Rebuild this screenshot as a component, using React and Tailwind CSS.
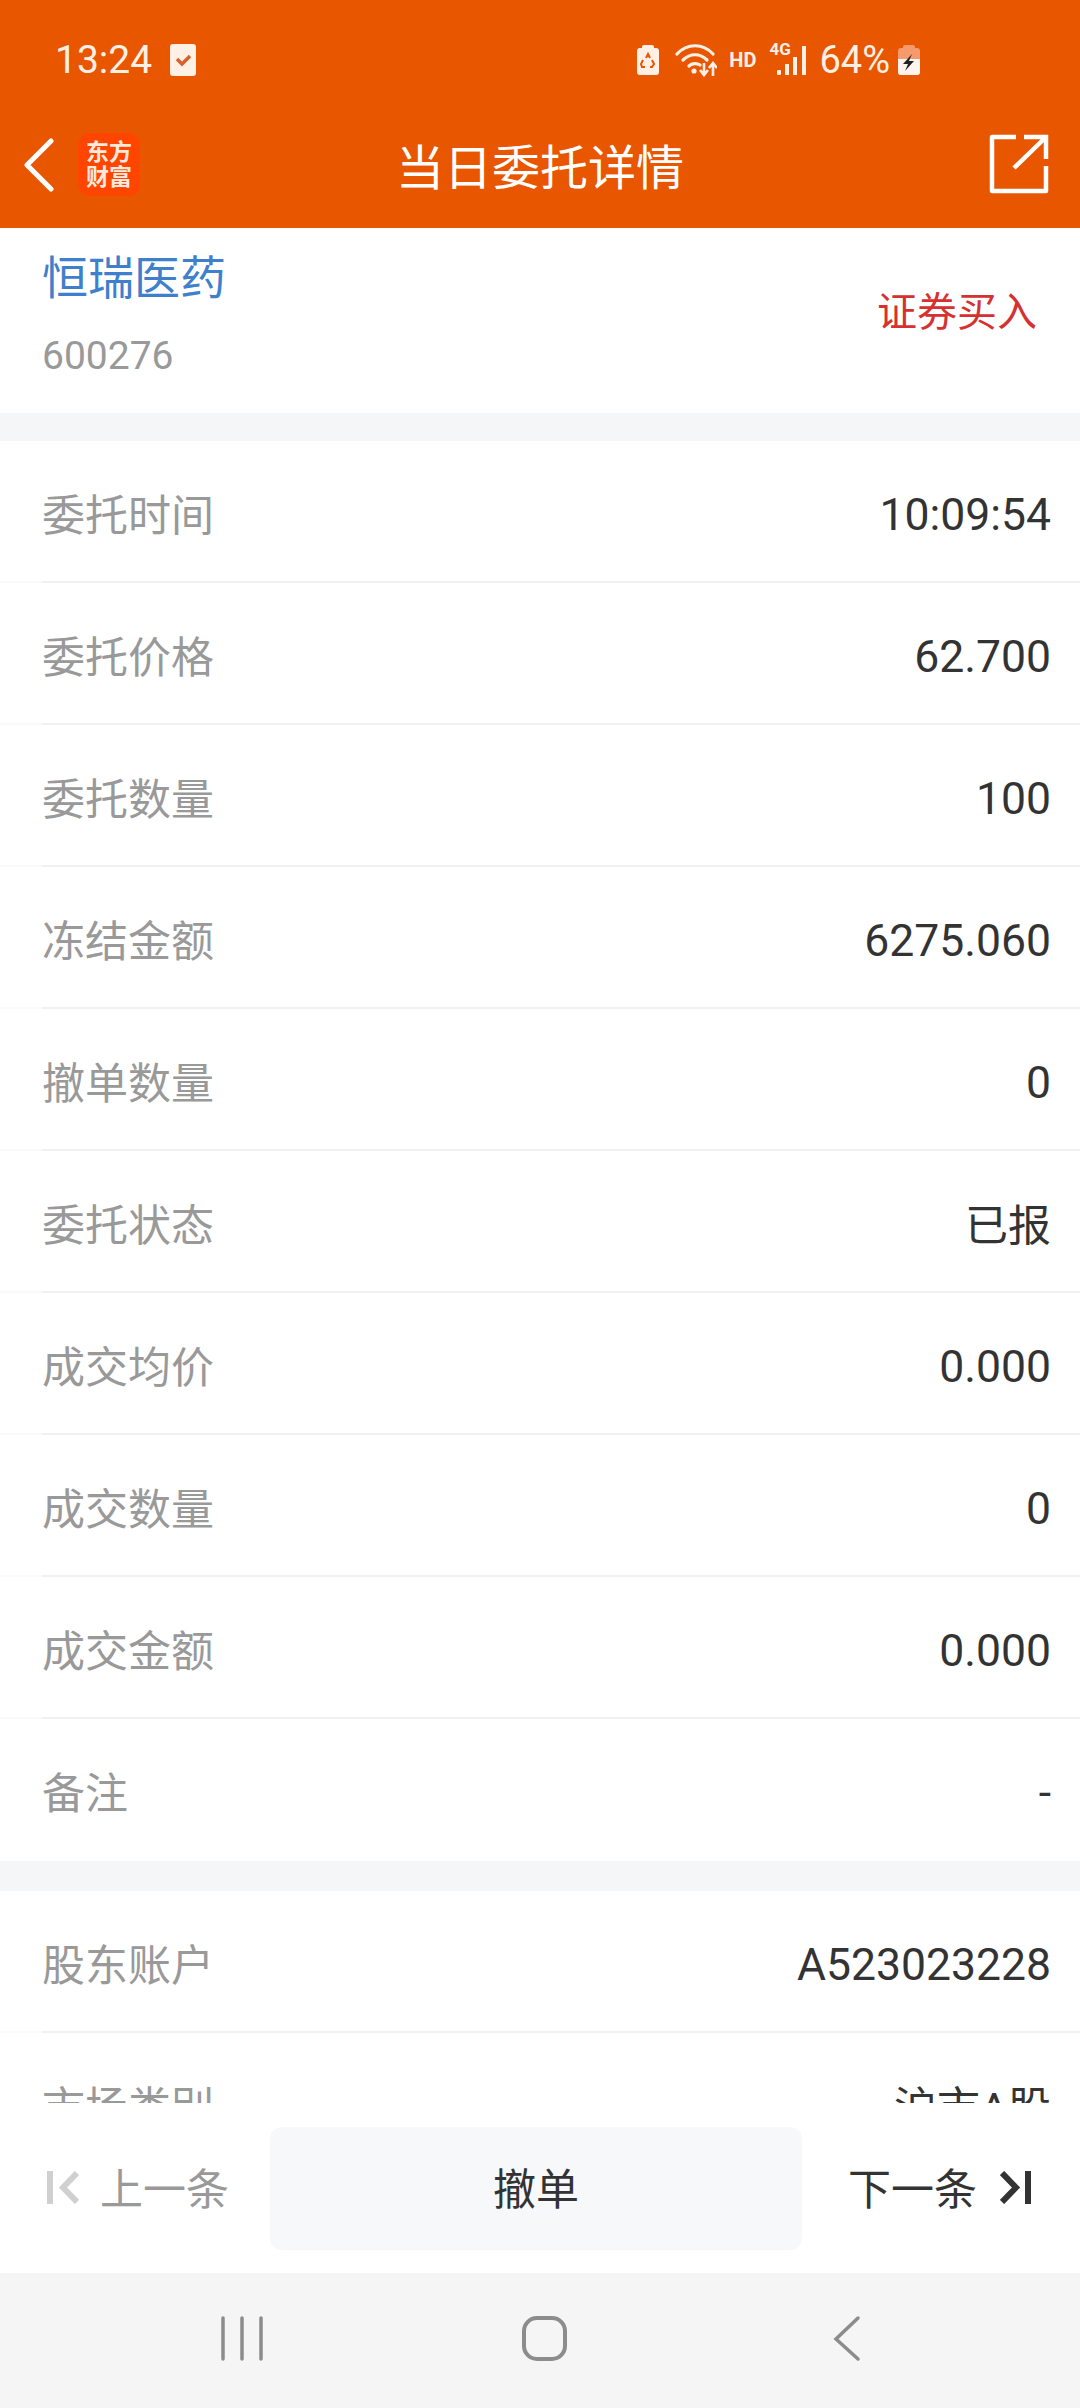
import React from 'react';

const mainRows = [
  ['委托时间', '10:09:54'],
  ['委托价格', '62.700'],
  ['委托数量', '100'],
  ['冻结金额', '6275.060'],
  ['撤单数量', '0'],
  ['委托状态', '已报', true],
  ['成交均价', '0.000'],
  ['成交数量', '0'],
  ['成交金额', '0.000'],
  ['备注', '-'],
];

const accountRows = [
  ['股东账户', 'A523023228'],
  ['市场类别', '沪市A股', true],
];

const Row = ({ label, value, cjk, last }) => (
  <div className="relative flex h-[142px] shrink-0 items-center justify-between pl-[42px] pr-[29px] pt-[6px]">
    <span className="pt-[2px] text-[43px] text-[#999999]">{label}</span>
    {cjk ? (
      <span className="pt-[2px] text-[43px] text-[#333333]">{value}</span>
    ) : (
      <span className="text-[44.5px] text-[#333333]">{value}</span>
    )}
    {!last && (
      <>
        <div className="absolute bottom-0 left-0 h-[2px] w-[42px] bg-[#fafafa]" />
        <div className="absolute bottom-0 left-[42px] right-0 h-[2px] bg-[#f1f1f1]" />
      </>
    )}
  </div>
);

const StatusIcons = () => (
  <div className="flex items-center">
    {/* batterie recyclage */}
    <svg width="22" height="30" viewBox="0 0 22 30" className="mr-[16px]">
      <path d="M7 0h8a2 2 0 0 1 2 2v1h2a3 3 0 0 1 3 3v21a3 3 0 0 1-3 3H3a3 3 0 0 1-3-3V6a3 3 0 0 1 3-3h2V2a2 2 0 0 1 2-2z" fill="#fff0e6" />
      <path d="M9 13l2-4 2 4M15 15l2 4-2 3h-2M8 22H5l-1-3 2-4" fill="none" stroke="#e85600" strokeWidth="2" />
    </svg>
    {/* wifi */}
    <svg width="42" height="34" viewBox="0 0 42 34" className="mr-[12px]">
      <g fill="none" stroke="#fff0e6" strokeWidth="3.2" strokeLinecap="round">
        <path d="M2 11C12 0 28 0 38 11" />
        <path d="M8 17c7-7 17-7 24 0" />
        <path d="M14 23c3-3 8-3 11-1" />
      </g>
      <circle cx="19" cy="28" r="2.6" fill="#fff0e6" />
      <path d="M29 20v11M25 27l4 5 4-5M38 33V21M34 25l4-5 4 5" fill="none" stroke="#fff0e6" strokeWidth="2.6" />
    </svg>
    <span className="mr-[13px] text-[20px] font-bold leading-none text-[#fff0e6]">HD</span>
    {/* 4G signal */}
    <div className="relative mr-[12px] h-[34px] w-[38px]">
      <span className="absolute left-0 top-[-2px] text-[17px] font-bold leading-[17px] text-[#fff0e6]">4G</span>
      <svg width="38" height="34" viewBox="0 0 38 34" className="absolute left-0 top-0">
        <g fill="#fff0e6">
          <rect x="8" y="27" width="4" height="5" rx="1" />
          <rect x="16" y="21" width="4" height="11" />
          <rect x="24" y="14" width="4" height="18" />
          <rect x="33" y="3" width="4" height="29" />
        </g>
      </svg>
    </div>
    <span className="mr-[8px] text-[38px] leading-none text-[#fff0e6]">64%</span>
    {/* batterie en charge */}
    <svg width="22" height="30" viewBox="0 0 22 30">
      <path d="M7 0h8a2 2 0 0 1 2 2v1h2a3 3 0 0 1 3 3v21a3 3 0 0 1-3 3H3a3 3 0 0 1-3-3V6a3 3 0 0 1 3-3h2V2a2 2 0 0 1 2-2z" fill="#f59a6c" />
      <path d="M0 14h22v13a3 3 0 0 1-3 3H3a3 3 0 0 1-3-3z" fill="#fff5ee" />
      <path d="M14 9L5 19h5l-3 7 9-10h-5l3-7z" fill="#222222" />
    </svg>
  </div>
);

export default function App() {
  return (
    <div
      className="flex h-[2408px] w-[1080px] flex-col overflow-hidden bg-white"
      style={{ fontFamily: 'Roboto, "Noto Sans CJK SC", sans-serif' }}
    >
      {/* En-tête */}
      <header className="h-[228px] shrink-0 bg-[#e85600]">
        <div className="flex h-[120px] items-center justify-between pl-[55px] pr-[160px]">
          <div className="flex items-center">
            <span className="text-[39px] leading-none text-[#fff0e6]">13:24</span>
            <div className="ml-[18px] flex h-[32px] w-[26px] items-center justify-center rounded-[3px] bg-[#fff0e6]">
              <svg width="18" height="14" viewBox="0 0 18 14">
                <path d="M3 6l5 5 8-8" fill="none" stroke="#d9602a" strokeWidth="3.4" />
              </svg>
            </div>
          </div>
          <StatusIcons />
        </div>
        <div className="relative flex h-[108px] items-center justify-center pb-[10px]">
          <div className="absolute left-[23px] top-[13px] flex h-[63px] items-center">
            <svg width="32" height="54" viewBox="0 0 32 54">
              <path d="M28 3L4 27l24 24" fill="none" stroke="#ffffff" strokeWidth="5" strokeLinecap="round" strokeLinejoin="round" />
            </svg>
            <div className="ml-[23px] flex h-[63px] w-[62px] flex-col items-center justify-center rounded-[12px] bg-[#ff4500] text-[23px] font-bold leading-[25px] text-[#ffe9dc]">
              <span>东方</span>
              <span>财富</span>
            </div>
          </div>
          <h1 className="text-[48px] font-normal leading-none text-white">当日委托详情</h1>
          <svg width="60" height="60" viewBox="0 0 60 60" className="absolute right-[31px] top-[14px]">
            <path d="M27 3H3v54h54V32" fill="none" stroke="#ffffff" strokeWidth="4.5" strokeLinejoin="round" />
            <path d="M25 34L56 4M35 3h22v22" fill="none" stroke="#ffffff" strokeWidth="4.5" />
          </svg>
        </div>
      </header>

      {/* Contenu défilant */}
      <main className="min-h-0 flex-1 overflow-hidden">
        <section className="flex h-[185px] items-start justify-between pl-[42px] pr-[43px]">
          <div className="flex flex-col">
            <span className="mt-[21px] text-[46px] leading-[58px] text-[#3f80cc]">恒瑞医药</span>
            <span className="mt-[26px] text-[39px] leading-[46px] text-[#999999]">600276</span>
          </div>
          <span className="mt-[60px] text-[40px] leading-[50px] text-[#d63031]">证券买入</span>
        </section>
        <div className="h-[28px] bg-[#f5f6f8]" />
        {mainRows.map(([label, value, cjk], i) => (
          <Row key={label} label={label} value={value} cjk={cjk} last={i === mainRows.length - 1} />
        ))}
        <div className="h-[30px] bg-[#f5f6f8]" />
        {accountRows.map(([label, value, cjk]) => (
          <Row key={label} label={label} value={value} cjk={cjk} />
        ))}
      </main>

      {/* Pied de page */}
      <footer className="flex h-[170px] shrink-0 items-center bg-white">
        <div className="flex w-[270px] items-center pl-[47px] text-[43px] text-[#999999]">
          <svg width="32" height="33" viewBox="0 0 32 33" className="mt-[-2px]">
            <path d="M3 0v33" stroke="#d0d0d0" strokeWidth="6" />
            <path d="M30 2L16 16.5 30 31" fill="none" stroke="#d0d0d0" strokeWidth="6" />
          </svg>
          <span className="ml-[21px] pt-[5px]">上一条</span>
        </div>
        <div className="flex h-[123px] w-[532px] items-center justify-center rounded-[12px] bg-[#f7f8fa] pt-[4px] text-[43px] text-[#333333]">
          撤单
        </div>
        <div className="flex flex-1 items-center pl-[46px] text-[43px] text-[#333333]">
          <span className="pt-[5px]">下一条</span>
          <svg width="32" height="33" viewBox="0 0 32 33" className="ml-[23px] mt-[-2px]">
            <path d="M2 2l14 14.5L2 31" fill="none" stroke="#333333" strokeWidth="6" />
            <path d="M28 0v33" stroke="#333333" strokeWidth="6" />
          </svg>
        </div>
      </footer>

      {/* Barre de navigation */}
      <nav className="flex h-[135px] shrink-0 items-center bg-[#f5f5f5] pb-[3px]">
        <svg width="1080" height="50" viewBox="0 0 1080 50">
          <g fill="none" stroke="#8c8c8c" strokeWidth="3.5" strokeLinecap="round">
            <path d="M223 4v41M242 4v41M261 4v41" />
            <rect x="524" y="4" width="41" height="41" rx="13" strokeWidth="4" />
            <path d="M858 4L836 25l22 20" strokeWidth="3.5" />
          </g>
        </svg>
      </nav>
    </div>
  );
}
